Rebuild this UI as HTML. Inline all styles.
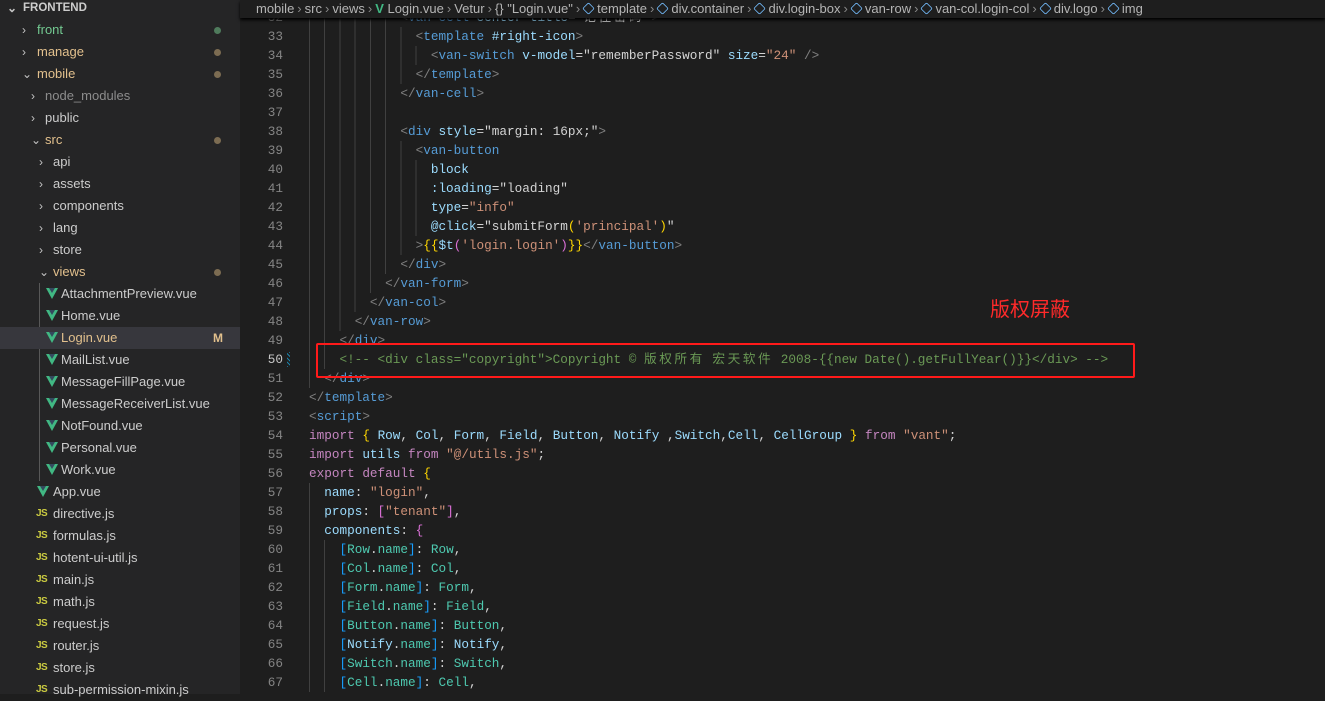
<!DOCTYPE html>
<html><head><meta charset="utf-8"><style>
*{margin:0;padding:0;box-sizing:border-box}
body{width:1325px;height:694px;overflow:hidden;background:#1e1e1e;position:relative;font-family:"Liberation Sans","Noto Sans CJK SC",sans-serif}
#side{position:absolute;left:0;top:0;width:240px;height:694px;background:#252526}
.r{position:absolute;left:0;width:240px;height:22px;line-height:22px;font-size:13px;color:#cccccc;white-space:nowrap}
.chev{position:absolute;top:0;color:#c5c5c5;font-size:12px}
.dot{position:absolute;left:214px;top:8px;width:7px;height:7px;border-radius:50%;background:#7c6c52}
.v{position:absolute;top:5px;width:0;height:0;border-left:6px solid transparent;border-right:6px solid transparent;border-top:11px solid #41b883}
.v:after{content:"";position:absolute;left:-3px;top:-11px;border-left:3px solid transparent;border-right:3px solid transparent;border-top:5px solid #34495e}
.js{position:absolute;top:0;font-size:10px;font-weight:bold;color:#cbcb41;letter-spacing:-0.5px}
#bc{position:absolute;left:240px;top:0;width:1085px;height:18px;background:#1e1e1e;box-shadow:0 2px 3px #000;z-index:2;font-size:13px;color:#b5b5b5;line-height:17px;padding-left:16px;white-space:nowrap}
#bc .sp{color:#8a8a8a;margin:0 3px}
#bc .cube{display:inline-block;width:11px;height:11px;border:1.5px solid #75beff;border-radius:2px;transform:rotate(45deg) scale(.8);vertical-align:-1px;margin-right:3px}
#code{position:absolute;left:240px;top:8px;width:1085px;font-family:"Liberation Mono","Noto Sans CJK SC",monospace;font-size:12.7px;color:#d4d4d4}
.l{height:19px;line-height:19px;white-space:pre;position:relative}
.n{position:absolute;left:0;width:43px;text-align:right;color:#858585}
.c{position:absolute;left:69px}
.ig{position:absolute;left:69px;top:0;height:19px;background:repeating-linear-gradient(90deg,#404040 0 1px,transparent 1px 15.24px)}
.cj{letter-spacing:2.5px}
.g{color:#808080}.t{color:#569cd6}.a{color:#9cdcfe}.s{color:#ce9178}.cm{color:#6a9955}.k{color:#c586c0}.y{color:#ffd700}.p{color:#da70d6}.b{color:#179fff}.e{color:#4ec9b0}.f{color:#dcdcaa}.w{color:#d4d4d4}
#box{position:absolute;left:316px;top:343px;width:819px;height:35px;border:2.5px solid #ff1a1a;border-radius:2px;z-index:3}
#note{position:absolute;left:990px;top:293px;font-size:20px;color:#ff2a2a;font-family:"Noto Sans CJK SC",sans-serif}
</style></head><body>
<div id="side">
<div class="r" style="top:-3px;font-weight:bold;font-size:11.5px;color:#cccccc"><span class="chev" style="left:7px">⌄</span><span style="position:absolute;left:23px">FRONTEND</span></div>
<div class="r" style="top:19px"><span class="chev" style="left:22px">›</span><span style="position:absolute;left:37px;color:#73c991">front</span><span class="dot" style="background:#4f7b5c"></span></div>
<div class="r" style="top:41px"><span class="chev" style="left:22px">›</span><span style="position:absolute;left:37px;color:#e2c08d">manage</span><span class="dot"></span></div>
<div class="r" style="top:63px"><span class="chev" style="left:22px">⌄</span><span style="position:absolute;left:37px;color:#e2c08d">mobile</span><span class="dot"></span></div>
<div class="r" style="top:85px"><span class="chev" style="left:31px">›</span><span style="position:absolute;left:45px;color:#8c8c8c">node_modules</span></div>
<div class="r" style="top:107px"><span class="chev" style="left:31px">›</span><span style="position:absolute;left:45px">public</span></div>
<div class="r" style="top:129px"><span class="chev" style="left:31px">⌄</span><span style="position:absolute;left:45px;color:#e2c08d">src</span><span class="dot"></span></div>
<div class="r" style="top:151px"><span class="chev" style="left:39px">›</span><span style="position:absolute;left:53px">api</span></div>
<div class="r" style="top:173px"><span class="chev" style="left:39px">›</span><span style="position:absolute;left:53px">assets</span></div>
<div class="r" style="top:195px"><span class="chev" style="left:39px">›</span><span style="position:absolute;left:53px">components</span></div>
<div class="r" style="top:217px"><span class="chev" style="left:39px">›</span><span style="position:absolute;left:53px">lang</span></div>
<div class="r" style="top:239px"><span class="chev" style="left:39px">›</span><span style="position:absolute;left:53px">store</span></div>
<div class="r" style="top:261px"><span class="chev" style="left:39px">⌄</span><span style="position:absolute;left:53px;color:#e2c08d">views</span><span class="dot"></span></div>
<div style="position:absolute;left:39px;top:283px;width:1px;height:198px;background:#585858"></div>
<div class="r" style="top:283px"><span class="v" style="left:46px"></span><span style="position:absolute;left:61px">AttachmentPreview.vue</span></div>
<div class="r" style="top:305px"><span class="v" style="left:46px"></span><span style="position:absolute;left:61px">Home.vue</span></div>
<div class="r" style="top:327px;background:#37373d"><span class="v" style="left:46px"></span><span style="position:absolute;left:61px;color:#e2c08d">Login.vue</span><span style="position:absolute;left:213px;color:#e2c08d;font-weight:bold;font-size:12px">M</span></div>
<div class="r" style="top:349px"><span class="v" style="left:46px"></span><span style="position:absolute;left:61px">MailList.vue</span></div>
<div class="r" style="top:371px"><span class="v" style="left:46px"></span><span style="position:absolute;left:61px">MessageFillPage.vue</span></div>
<div class="r" style="top:393px"><span class="v" style="left:46px"></span><span style="position:absolute;left:61px">MessageReceiverList.vue</span></div>
<div class="r" style="top:415px"><span class="v" style="left:46px"></span><span style="position:absolute;left:61px">NotFound.vue</span></div>
<div class="r" style="top:437px"><span class="v" style="left:46px"></span><span style="position:absolute;left:61px">Personal.vue</span></div>
<div class="r" style="top:459px"><span class="v" style="left:46px"></span><span style="position:absolute;left:61px">Work.vue</span></div>
<div class="r" style="top:481px"><span class="v" style="left:37px"></span><span style="position:absolute;left:53px">App.vue</span></div>
<div class="r" style="top:503px"><span class="js" style="left:36px">JS</span><span style="position:absolute;left:53px">directive.js</span></div>
<div class="r" style="top:525px"><span class="js" style="left:36px">JS</span><span style="position:absolute;left:53px">formulas.js</span></div>
<div class="r" style="top:547px"><span class="js" style="left:36px">JS</span><span style="position:absolute;left:53px">hotent-ui-util.js</span></div>
<div class="r" style="top:569px"><span class="js" style="left:36px">JS</span><span style="position:absolute;left:53px">main.js</span></div>
<div class="r" style="top:591px"><span class="js" style="left:36px">JS</span><span style="position:absolute;left:53px">math.js</span></div>
<div class="r" style="top:613px"><span class="js" style="left:36px">JS</span><span style="position:absolute;left:53px">request.js</span></div>
<div class="r" style="top:635px"><span class="js" style="left:36px">JS</span><span style="position:absolute;left:53px">router.js</span></div>
<div class="r" style="top:657px"><span class="js" style="left:36px">JS</span><span style="position:absolute;left:53px">store.js</span></div>
<div class="r" style="top:679px"><span class="js" style="left:36px">JS</span><span style="position:absolute;left:53px">sub-permission-mixin.js</span></div>
</div>
<div id="bc">mobile<span class="sp">›</span>src<span class="sp">›</span>views<span class="sp">›</span><span style="color:#41b883;font-weight:bold">V</span> Login.vue<span class="sp">›</span>Vetur<span class="sp">›</span>{} "Login.vue"<span class="sp">›</span><span class="cube"></span>template<span class="sp">›</span><span class="cube"></span>div.container<span class="sp">›</span><span class="cube"></span>div.login-box<span class="sp">›</span><span class="cube"></span>van-row<span class="sp">›</span><span class="cube"></span>van-col.login-col<span class="sp">›</span><span class="cube"></span>div.logo<span class="sp">›</span><span class="cube"></span>img</div>
<div id="code">
<div class="l"><span class="n">32</span><span class="ig" style="width:91px"></span><span class="c">            <span class="g">&lt;</span><span class="t">van-cell</span> <span class="a">center</span> <span class="a">title</span>=<span class="w">"<span class="cj">记住密码</span>"</span><span class="g">&gt;</span></span></div>
<div class="l"><span class="n">33</span><span class="ig" style="width:106px"></span><span class="c">              <span class="g">&lt;</span><span class="t">template</span> <span class="a">#right-icon</span><span class="g">&gt;</span></span></div>
<div class="l"><span class="n">34</span><span class="ig" style="width:122px"></span><span class="c">                <span class="g">&lt;</span><span class="t">van-switch</span> <span class="a">v-model</span>=<span class="w">"rememberPassword"</span> <span class="a">size</span>=<span class="s">"24"</span> <span class="g">/&gt;</span></span></div>
<div class="l"><span class="n">35</span><span class="ig" style="width:106px"></span><span class="c">              <span class="g">&lt;/</span><span class="t">template</span><span class="g">&gt;</span></span></div>
<div class="l"><span class="n">36</span><span class="ig" style="width:91px"></span><span class="c">            <span class="g">&lt;/</span><span class="t">van-cell</span><span class="g">&gt;</span></span></div>
<div class="l"><span class="n">37</span><span class="ig" style="width:91px"></span><span class="c"></span></div>
<div class="l"><span class="n">38</span><span class="ig" style="width:91px"></span><span class="c">            <span class="g">&lt;</span><span class="t">div</span> <span class="a">style</span>=<span class="w">"margin: 16px;"</span><span class="g">&gt;</span></span></div>
<div class="l"><span class="n">39</span><span class="ig" style="width:106px"></span><span class="c">              <span class="g">&lt;</span><span class="t">van-button</span></span></div>
<div class="l"><span class="n">40</span><span class="ig" style="width:122px"></span><span class="c">                <span class="a">block</span></span></div>
<div class="l"><span class="n">41</span><span class="ig" style="width:122px"></span><span class="c">                <span class="a">:loading</span>=<span class="w">"loading"</span></span></div>
<div class="l"><span class="n">42</span><span class="ig" style="width:122px"></span><span class="c">                <span class="a">type</span>=<span class="s">"info"</span></span></div>
<div class="l"><span class="n">43</span><span class="ig" style="width:122px"></span><span class="c">                <span class="a">@click</span>=<span class="w">"submitForm<span class="y">(</span><span class="s">'principal'</span><span class="y">)</span>"</span></span></div>
<div class="l"><span class="n">44</span><span class="ig" style="width:106px"></span><span class="c">              <span class="g">&gt;</span><span class="y">{{</span><span class="a">$t</span><span class="p">(</span><span class="s">'login.login'</span><span class="p">)</span><span class="y">}}</span><span class="g">&lt;/</span><span class="t">van-button</span><span class="g">&gt;</span></span></div>
<div class="l"><span class="n">45</span><span class="ig" style="width:91px"></span><span class="c">            <span class="g">&lt;/</span><span class="t">div</span><span class="g">&gt;</span></span></div>
<div class="l"><span class="n">46</span><span class="ig" style="width:76px"></span><span class="c">          <span class="g">&lt;/</span><span class="t">van-form</span><span class="g">&gt;</span></span></div>
<div class="l"><span class="n">47</span><span class="ig" style="width:61px"></span><span class="c">        <span class="g">&lt;/</span><span class="t">van-col</span><span class="g">&gt;</span></span></div>
<div class="l"><span class="n">48</span><span class="ig" style="width:45px"></span><span class="c">      <span class="g">&lt;/</span><span class="t">van-row</span><span class="g">&gt;</span></span></div>
<div class="l"><span class="n">49</span><span class="ig" style="width:30px"></span><span class="c">    <span class="g">&lt;/</span><span class="t">div</span><span class="g">&gt;</span></span></div>
<div class="l"><span class="n" style="color:#c6c6c6">50</span><span style="position:absolute;left:47px;top:2px;width:3px;height:15px;background:repeating-linear-gradient(45deg,#1b81a8 0 1px,#1e1e1e 1px 3px)"></span><span class="ig" style="width:30px"></span><span class="c cm">    &lt;!-- &lt;div class="copyright"&gt;Copyright © <span class="cj">版权所有</span> <span class="cj">宏天软件</span> 2008-{{new Date().getFullYear()}}&lt;/div&gt; --&gt;</span></div>
<div class="l"><span class="n">51</span><span class="ig" style="width:15px"></span><span class="c">  <span class="g">&lt;/</span><span class="t">div</span><span class="g">&gt;</span></span></div>
<div class="l"><span class="n">52</span><span class="c"><span class="g">&lt;/</span><span class="t">template</span><span class="g">&gt;</span></span></div>
<div class="l"><span class="n">53</span><span class="c"><span class="g">&lt;</span><span class="t">script</span><span class="g">&gt;</span></span></div>
<div class="l"><span class="n">54</span><span class="c"><span class="k">import</span> <span class="y">{</span> <span class="a">Row</span>, <span class="a">Col</span>, <span class="a">Form</span>, <span class="a">Field</span>, <span class="a">Button</span>, <span class="a">Notify</span> ,<span class="a">Switch</span>,<span class="a">Cell</span>, <span class="a">CellGroup</span> <span class="y">}</span> <span class="k">from</span> <span class="s">"vant"</span>;</span></div>
<div class="l"><span class="n">55</span><span class="c"><span class="k">import</span> <span class="a">utils</span> <span class="k">from</span> <span class="s">"@/utils.js"</span>;</span></div>
<div class="l"><span class="n">56</span><span class="c"><span class="k">export</span> <span class="k">default</span> <span class="y">{</span></span></div>
<div class="l"><span class="n">57</span><span class="ig" style="width:15px"></span><span class="c">  <span class="a">name</span>: <span class="s">"login"</span>,</span></div>
<div class="l"><span class="n">58</span><span class="ig" style="width:15px"></span><span class="c">  <span class="a">props</span>: <span class="p">[</span><span class="s">"tenant"</span><span class="p">]</span>,</span></div>
<div class="l"><span class="n">59</span><span class="ig" style="width:15px"></span><span class="c">  <span class="a">components</span>: <span class="p">{</span></span></div>
<div class="l"><span class="n">60</span><span class="ig" style="width:30px"></span><span class="c">    <span class="b">[</span><span class="e">Row</span>.<span class="e">name</span><span class="b">]</span>: <span class="e">Row</span>,</span></div>
<div class="l"><span class="n">61</span><span class="ig" style="width:30px"></span><span class="c">    <span class="b">[</span><span class="e">Col</span>.<span class="e">name</span><span class="b">]</span>: <span class="e">Col</span>,</span></div>
<div class="l"><span class="n">62</span><span class="ig" style="width:30px"></span><span class="c">    <span class="b">[</span><span class="e">Form</span>.<span class="e">name</span><span class="b">]</span>: <span class="e">Form</span>,</span></div>
<div class="l"><span class="n">63</span><span class="ig" style="width:30px"></span><span class="c">    <span class="b">[</span><span class="e">Field</span>.<span class="e">name</span><span class="b">]</span>: <span class="e">Field</span>,</span></div>
<div class="l"><span class="n">64</span><span class="ig" style="width:30px"></span><span class="c">    <span class="b">[</span><span class="e">Button</span>.<span class="e">name</span><span class="b">]</span>: <span class="e">Button</span>,</span></div>
<div class="l"><span class="n">65</span><span class="ig" style="width:30px"></span><span class="c">    <span class="b">[</span><span class="a">Notify</span>.<span class="e">name</span><span class="b">]</span>: <span class="a">Notify</span>,</span></div>
<div class="l"><span class="n">66</span><span class="ig" style="width:30px"></span><span class="c">    <span class="b">[</span><span class="e">Switch</span>.<span class="e">name</span><span class="b">]</span>: <span class="e">Switch</span>,</span></div>
<div class="l"><span class="n">67</span><span class="ig" style="width:30px"></span><span class="c">    <span class="b">[</span><span class="e">Cell</span>.<span class="e">name</span><span class="b">]</span>: <span class="e">Cell</span>,</span></div>
</div>
<div id="box"></div>
<div id="note">版权屏蔽</div>
</body></html>
